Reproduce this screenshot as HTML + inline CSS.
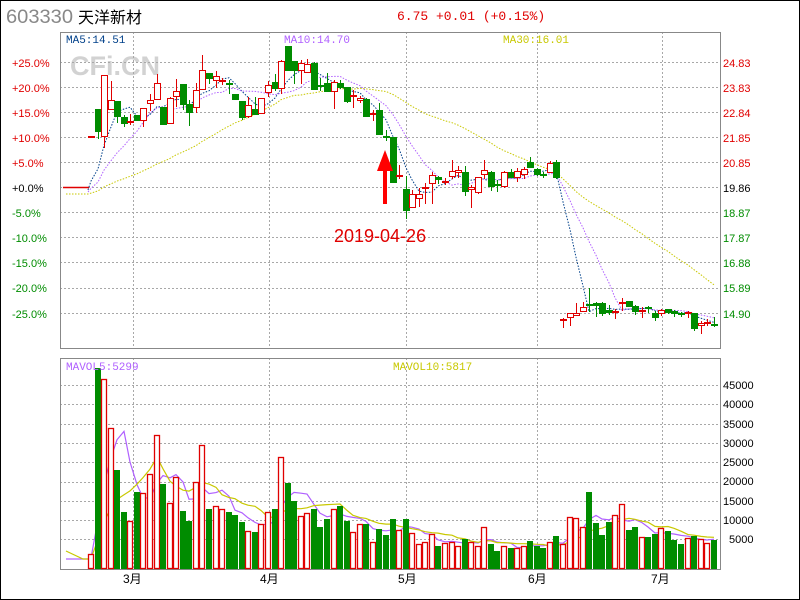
<!DOCTYPE html>
<html><head><meta charset="utf-8"><style>
html,body{margin:0;padding:0;background:#fff;}
#wrap{position:relative;width:798px;height:598px;border:1px solid #000;overflow:hidden;font-family:"Liberation Sans","Noto Sans CJK SC",sans-serif;}
svg{position:absolute;left:-1px;top:-1px;}
</style></head><body><div id="wrap">
<svg id="s" width="800" height="600" xmlns="http://www.w3.org/2000/svg">
<g font-family="Liberation Sans, Noto Sans CJK SC, sans-serif">
<text x="6" y="23" font-size="19" fill="#888" textLength="67" lengthAdjust="spacingAndGlyphs">603330</text>
<text x="78" y="23" font-size="16" fill="#000">天洋新材</text>
<text x="397" y="20" font-size="13" fill="#e00000" font-family="Liberation Mono, monospace">6.75 +0.01 (+0.15%)</text>
<text x="70" y="75" font-size="27" font-weight="bold" fill="#d2d2d2">CFi.CN</text>
</g>
<g id="grid"></g>
<g id="lines"></g>
<g id="cand"></g>
<g font-family="Liberation Mono, monospace" font-size="11">
<text x="66" y="43" fill="#00408a">MA5:14.51</text>
<text x="284" y="43" fill="#b060ff">MA10:14.70</text>
<text x="503" y="43" fill="#c8c800">MA30:16.01</text>
<text x="66" y="370" fill="#b060ff">MAVOL5:5299</text>
<text x="393" y="370" fill="#c8c800">MAVOL10:5817</text>
</g>
<g font-family="Liberation Sans, sans-serif" font-size="11">
<text x="12" y="67" fill="#e00000">+25.0%</text>
<text x="12" y="92" fill="#e00000">+20.0%</text>
<text x="12" y="117" fill="#e00000">+15.0%</text>
<text x="12" y="142" fill="#e00000">+10.0%</text>
<text x="12" y="167" fill="#e00000">+5.0%</text>
<text x="12" y="192" fill="#000">+0.0%</text>
<text x="12" y="217" fill="#008c00">-5.0%</text>
<text x="12" y="242" fill="#008c00">-10.0%</text>
<text x="12" y="267" fill="#008c00">-15.0%</text>
<text x="12" y="292" fill="#008c00">-20.0%</text>
<text x="12" y="318" fill="#008c00">-25.0%</text>
<text x="723" y="67" fill="#e00000">24.83</text>
<text x="723" y="92" fill="#e00000">23.83</text>
<text x="723" y="117" fill="#e00000">22.84</text>
<text x="723" y="142" fill="#e00000">21.85</text>
<text x="723" y="167" fill="#e00000">20.85</text>
<text x="723" y="192" fill="#000">19.86</text>
<text x="723" y="217" fill="#008c00">18.87</text>
<text x="723" y="242" fill="#008c00">17.87</text>
<text x="723" y="267" fill="#008c00">16.88</text>
<text x="723" y="292" fill="#008c00">15.89</text>
<text x="723" y="318" fill="#008c00">14.90</text>
<text x="723" y="389" fill="#000">45000</text>
<text x="723" y="408" fill="#000">40000</text>
<text x="723" y="428" fill="#000">35000</text>
<text x="723" y="447" fill="#000">30000</text>
<text x="723" y="466" fill="#000">25000</text>
<text x="723" y="485" fill="#000">20000</text>
<text x="723" y="505" fill="#000">15000</text>
<text x="723" y="524" fill="#000">10000</text>
<text x="729" y="543" fill="#000">5000</text>
</g>
<g font-family="Liberation Sans, Noto Sans CJK SC, sans-serif" font-size="12" fill="#000">
<text x="123" y="583">3月</text>
<text x="260" y="583">4月</text>
<text x="398" y="583">5月</text>
<text x="528" y="583">6月</text>
<text x="651" y="583">7月</text>
</g>
<text x="334" y="242" font-size="18" fill="#e00000" font-family="Liberation Sans, sans-serif">2019-04-26</text>
<rect x="383" y="165" width="4" height="39" fill="#f00"/>
<polygon points="385,150 377,171 393,171" fill="#f00"/>
</svg>
</div>
<script>
var NS="http://www.w3.org/2000/svg";
function el(p,t,a){var e=document.createElementNS(NS,t);for(var k in a)e.setAttribute(k,a[k]);p.appendChild(e);return e;}
var G=document.getElementById('grid'),L=document.getElementById('lines'),C=document.getElementById('cand');
var RED="#e00000",GRN="#008c00";
[62,87,112,137,162,187,212,237,262,288,313].forEach(function(y){el(G,'line',{x1:60,x2:720,y1:y+.5,y2:y+.5,stroke:'#a8a8a8','stroke-dasharray':'2 2'});});
[385,404,424,443,462,482,501,520,539].forEach(function(y){el(G,'line',{x1:60,x2:720,y1:y+.5,y2:y+.5,stroke:'#a8a8a8','stroke-dasharray':'2 2'});});
[133,269,406,537,662].forEach(function(x){el(G,'line',{x1:x+.5,x2:x+.5,y1:32,y2:348,stroke:'#a8a8a8','stroke-dasharray':'2 2'});el(G,'line',{x1:x+.5,x2:x+.5,y1:358,y2:569,stroke:'#a8a8a8','stroke-dasharray':'2 2'});});
el(G,'rect',{x:60.5,y:32.5,width:660,height:316,fill:'none',stroke:'#888'});
el(G,'rect',{x:60.5,y:358.5,width:660,height:211,fill:'none',stroke:'#888'});
el(G,'line',{x1:63,x2:89,y1:187.5,y2:187.5,stroke:RED,'stroke-width':1.5});
var K=[['r',137,137],['g',109,131,109,138],['r',75,136,75,147],['r',100,109,81,109],['g',101,116,101,122],['g',117,123,115,126],['r',122,122,114,124],['g',115,120],['r',108,120,108,126],['r',100,103,94,110],
['r',83,99,74,99],['g',107,124],['r',98,123,97,123],['r',91,96,79,106],['g',84,104,84,109],['g',104,112,100,125],['r',90,107,83,112],['r',70,89,55,89],['g',73,78,73,83],['r',76,80,71,87],
['r',81,81,78,84],['g',84,84,80,93],['g',94,99],['g',101,117,101,119],['r',105,116,97,117],['g',109,114,97,114],['r',98,113,98,113],['r',85,92,81,96],['g',82,88,74,90],['r',61,88,60,93],
['g',46,70],['g',61,70,61,83],['r',63,70,60,83],['r',64,72,59,72],['g',63,89,62,89],['g',86,86,78,90],['g',83,91,73,91],['r',82,91,80,108],['g',83,87,80,88],['g',87,101,87,102],
['r',96,96,90,107],['r',98,100,96,102],['g',99,116,98,116],['r',114,114,110,120],['g',110,134,103,134],['g',137,137,130,140],['g',137,182,137,182],['r',176,176,165,178],['g',189,210,176,218],['r',194,207,190,207],
['r',194,198,188,206],['r',188,188,183,203],['r',175,183,172,203],['g',177,179,176,183],['r',182,182,178,184],['r',171,176,160,178],['r',170,172,166,177],['g',172,191,166,195],['r',187,189,185,207],['r',177,192,177,193],
['r',170,174,160,178],['g',172,186,171,190],['g',185,185,180,191],['r',172,186,171,187],['g',172,177,169,177],['r',171,177,168,181],['r',169,174,167,178],['g',162,167,157,167],['g',169,174,168,175],['g',175,175,172,177],
['r',163,172,161,172],['g',162,177,160,178],['r',320,320,318,327],['r',313,317,313,325],['r',313,315,303,315],['r',307,311,302,311],['g',305,305,288,311],['g',303,305,302,316],['g',303,313,302,315],['g',310,312,305,314],
['r',312,312,309,318],['r',303,303,298,310],['g',301,306,301,306],['g',306,311,305,314],['r',311,311,307,317],['g',308,309,306,312],['g',313,317,311,320],['r',310,313,309,315],['g',309,312,309,313],['g',311,313,310,316],
['g',314,314,312,316],['r',313,313,311,317],['g',313,328,313,330],['r',323,325,321,333],['r',323,323,319,325],['g',325,325,317,326]];
var X=function(i){return Math.round(91+6.555*i);};
var closes=[];
K.forEach(function(k,i){
 var x=X(i),col=k[0]=='r'?RED:GRN,t=k[1],b=k[2],h=k[3]!=null?k[3]:t,l=k[4]!=null?k[4]:b;
 closes.push(k[0]=='r'?t:b);
 if(h<t)el(C,'line',{x1:x+.5,x2:x+.5,y1:h,y2:t,stroke:col});
 if(l>b)el(C,'line',{x1:x+.5,x2:x+.5,y1:b,y2:l+1,stroke:col});
 if(b-t<2){el(C,'rect',{x:x-3,y:t-1,width:7,height:2,fill:col});}
 else if(k[0]=='r'){el(C,'rect',{x:x-2.5,y:t+.5,width:6,height:b-t,fill:'#fff',stroke:col});}
 else el(C,'rect',{x:x-3,y:t,width:7,height:b-t+1,fill:col});
});
function ma(arr,n,pre){var o=[];for(var i=0;i<arr.length;i++){var s=0,c=0;for(var j=i-n+1;j<=i;j++){s+=(j<0?pre:arr[j]);c++;}o.push(s/c);}return o;}
function poly(vals,col,dash,start,pre){var p=pre||'';for(var i=start;i<vals.length;i++)p+=X(i)+','+vals[i].toFixed(1)+' ';var a={points:p,fill:'none',stroke:col};if(dash)a['stroke-dasharray']=dash;el(L,'polyline',a);}
poly(ma(closes,5,192),'#00408a','1.5 1.5',0,'88,190 ');
poly(ma(closes,10,194),'#b060ff','1.5 1.5',0,'88,192 ');
poly(ma(closes,30,195),'#c8c800','1.5 1.5',0,'66,194 88,194 ');
var V=[['r',554],['g',368],['r',379],['r',428],['g',470],['g',512],['r',521],['g',492],['r',493],['r',474],['r',435],['g',484],['r',503],['r',477],['g',511],['g',521],['r',482],['r',445],['g',509],['r',506],['r',509],['g',512],['g',515],['g',522],['r',531],['g',532],['r',524],['r',512],['g',509],['r',457],['g',483],['g',501],['r',516],['r',513],['g',509],['g',527],['g',519],['r',509],['g',506],['g',521],['r',532],['r',524],['g',524],['r',542],['g',529],['g',535],['g',519],['r',530],
['g',519],['r',533],['r',544],['r',542],['r',534],['g',546],['r',543],['r',542],['r',546],['g',539],['r',542],['r',546],['r',527],['g',544],['g',551],['r',546],['g',548],['r',548],['r',546],['g',541],['g',546],['g',548],['r',542],['g',536],['r',544],['r',517],['r',518],['r',527],['g',492],['g',523],['g',535],['g',522],['r',515],['r',504],['g',530],['g',527],['r',537],['g',537],['g',534],['r',528],['g',531],['g',540],['g',544],['r',538],['g',536],['r',539],['r',543],['g',540]];
var vt=[];
V.forEach(function(v,i){var x=X(i);vt.push(v[1]);
 if(v[0]=='r')el(C,'rect',{x:x-2.5,y:v[1]+.5,width:5,height:569-v[1]-1,fill:'#fff',stroke:RED,'stroke-width':1.3});
 else el(C,'rect',{x:x-3,y:v[1],width:6,height:569-v[1],fill:GRN});});
function vpoly(vals,col,pre){var p=pre;for(var i=0;i<vals.length;i++)p+=X(i)+','+vals[i].toFixed(1)+' ';el(L,'polyline',{points:p,fill:'none',stroke:col,'stroke-width':1.2});}
vpoly(ma(vt,5,559),'#b060ff','66,559 88,559 ');
vpoly(ma(vt,10,559),'#c8c800','66,551 83,559 88,559 ');
</script>
</body></html>
